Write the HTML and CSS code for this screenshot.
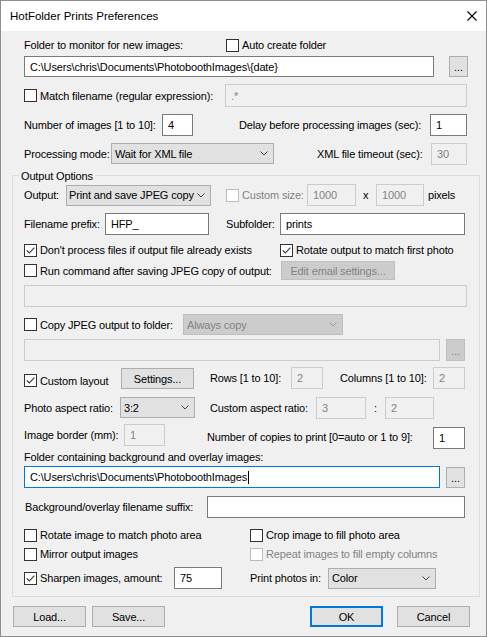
FILE: index.html
```html
<!DOCTYPE html>
<html>
<head>
<meta charset="utf-8">
<link rel="stylesheet" href="styles.css">
</head>
<body>
<div class="window">
  <div class="titlebar">
    <span class="title">HotFolder Prints Preferences</span>
    <svg class="close" width="10" height="10" viewBox="0 0 10 10"><path d="M0.5 0.5L9.5 9.5M9.5 0.5L0.5 9.5" stroke="#000" stroke-width="1.1" fill="none"/></svg>
  </div>

  <div class="row r1">
    <span class="lbl ml-23 w-202">Folder to monitor for new images:</span>
    <span class="chk"><span class="box"></span>Auto create folder</span>
  </div>
  <div class="row r2">
    <div class="field ml-23 w-410">C:\Users\chris\Documents\PhotoboothImages\{date}</div>
    <div class="btn dots ml-15 w-19">...</div>
  </div>
  <div class="row r3">
    <span class="chk ml-23 w-201"><span class="box"></span>Match filename (regular expression):</span>
    <div class="field dis h23 w-242">.*</div>
  </div>
  <div class="row r4">
    <span class="lbl ml-23 w-138">Number of images [1 to 10]:</span>
    <div class="field w-31">4</div>
    <span class="lbl ml-46 w-191">Delay before processing images (sec):</span>
    <div class="field w-37">1</div>
  </div>
  <div class="row r5">
    <span class="lbl ml-23 w-87">Processing mode:</span>
    <div class="combo w-163">Wait for XML file<svg class="chev" width="8" height="5" viewBox="0 0 8 5"><path d="M0.5 0.5L4 4L7.5 0.5" stroke="#444" fill="none"/></svg></div>
    <span class="lbl ml-43 w-114">XML file timeout (sec):</span>
    <div class="field dis w-36">30</div>
  </div>

  <div class="group">
    <span class="legend">Output Options</span>
    <div class="row g1">
      <span class="lbl ml-11 w-42">Output:</span>
      <div class="combo w-145">Print and save JPEG copy<svg class="chev" width="8" height="5" viewBox="0 0 8 5"><path d="M0.5 0.5L4 4L7.5 0.5" stroke="#444" fill="none"/></svg></div>
      <span class="chk off ml-15 w-81"><span class="box"></span>Custom size:</span>
      <div class="field dis w-49">1000</div>
      <span class="lbl sep-x w-20">x</span>
      <div class="field dis w-48">1000</div>
      <span class="lbl ml-4">pixels</span>
    </div>
    <div class="row g2">
      <span class="lbl ml-11 w-81">Filename prefix:</span>
      <div class="field w-104">HFP_</div>
      <span class="lbl ml-17 w-54">Subfolder:</span>
      <div class="field w-185">prints</div>
    </div>
    <div class="row g3">
      <span class="chk ml-11 w-256"><span class="box"><svg width="11" height="11" viewBox="0 0 11 11"><path d="M1.8 5.4L4.3 7.9L9.4 2.6" stroke="#333" stroke-width="1.1" fill="none"/></svg></span>Don't process files if output file already exists</span>
      <span class="chk"><span class="box"><svg width="11" height="11" viewBox="0 0 11 11"><path d="M1.8 5.4L4.3 7.9L9.4 2.6" stroke="#333" stroke-width="1.1" fill="none"/></svg></span>Rotate output to match first photo</span>
    </div>
    <div class="row g4">
      <span class="chk ml-11 w-257"><span class="box"></span>Run command after saving JPEG copy of output:</span>
      <div class="btn dis h19 w-114">Edit email settings...</div>
    </div>
    <div class="row g5">
      <div class="field dis ml-11 w-443"></div>
    </div>
    <div class="row g6">
      <span class="chk ml-11 w-159"><span class="box"></span>Copy JPEG output to folder:</span>
      <div class="combo dis w-160">Always copy<svg class="chev" width="8" height="5" viewBox="0 0 8 5"><path d="M0.5 0.5L4 4L7.5 0.5" stroke="#999" fill="none"/></svg></div>
    </div>
    <div class="row g7">
      <div class="field dis ml-11 w-416"></div>
      <div class="btn dis dots h22 ml-6 w-19">...</div>
    </div>
    <div class="row g8">
      <span class="chk ml-11 w-97 mt-7"><span class="box"><svg width="11" height="11" viewBox="0 0 11 11"><path d="M1.8 5.4L4.3 7.9L9.4 2.6" stroke="#333" stroke-width="1.1" fill="none"/></svg></span>Custom layout</span>
      <div class="btn w-73 mt-1">Settings...</div>
      <span class="lbl h22 ml-16 w-81">Rows [1 to 10]:</span>
      <div class="field dis w-32">2</div>
      <span class="lbl h22 ml-17 w-93">Columns [1 to 10]:</span>
      <div class="field dis w-32">2</div>
    </div>
    <div class="row g9">
      <span class="lbl ml-11 w-96">Photo aspect ratio:</span>
      <div class="combo w-75">3:2<svg class="chev" width="8" height="5" viewBox="0 0 8 5"><path d="M0.5 0.5L4 4L7.5 0.5" stroke="#444" fill="none"/></svg></div>
      <span class="lbl ml-15 w-106">Custom aspect ratio:</span>
      <div class="field dis w-50">3</div>
      <span class="lbl sep-colon w-19">:</span>
      <div class="field dis w-49">2</div>
    </div>
    <div class="row g10">
      <span class="lbl h22 ml-11 w-100">Image border (mm):</span>
      <div class="field dis w-41">1</div>
      <span class="lbl h22 ml-42 w-226 mt-2">Number of copies to print [0=auto or 1 to 9]:</span>
      <div class="field w-32 mt-3">1</div>
    </div>
    <div class="row g11">
      <span class="lbl ml-11">Folder containing background and overlay images:</span>
    </div>
    <div class="row g12">
      <div class="field focus ml-11 w-416">C:\Users\chris\Documents\PhotoboothImages<span class="caret"></span></div>
      <div class="btn dots ml-6 w-19">...</div>
    </div>
    <div class="row g13">
      <span class="lbl ml-12 w-182">Background/overlay filename suffix:</span>
      <div class="field w-258"></div>
    </div>
    <div class="row g14">
      <span class="chk ml-11 w-226"><span class="box"></span>Rotate image to match photo area</span>
      <span class="chk"><span class="box"></span>Crop image to fill photo area</span>
    </div>
    <div class="row g15">
      <span class="chk ml-11 w-226"><span class="box"></span>Mirror output images</span>
      <span class="chk off"><span class="box"></span>Repeat images to fill empty columns</span>
    </div>
    <div class="row g16">
      <span class="chk ml-11 w-150"><span class="box"><svg width="11" height="11" viewBox="0 0 11 11"><path d="M1.8 5.4L4.3 7.9L9.4 2.6" stroke="#333" stroke-width="1.1" fill="none"/></svg></span>Sharpen images, amount:</span>
      <div class="field w-48">75</div>
      <span class="lbl ml-28 w-78">Print photos in:</span>
      <div class="combo w-108">Color<svg class="chev" width="8" height="5" viewBox="0 0 8 5"><path d="M0.5 0.5L4 4L7.5 0.5" stroke="#444" fill="none"/></svg></div>
    </div>
  </div>

  <div class="row buttons">
    <div class="btn ml-12 w-73">Load...</div>
    <div class="btn ml-6 w-73">Save...</div>
    <div class="btn default ml-145 w-73">OK</div>
    <div class="btn ml-14 w-73">Cancel</div>
  </div>
</div>
</body>
</html>
```

FILE: styles.css
```css
html, body {
  margin: 0;
  padding: 0;
  background: #ffffff;
}

body {
  font-family: "Liberation Sans", Arial, sans-serif;
  font-size: 11px;
  letter-spacing: -0.15px;
  color: #000;
}

.window {
  width: 487px;
  height: 637px;
  box-sizing: border-box;
  border: 1px solid #8e8e8e;
  background: #f0f0f0;
  display: flex;
  flex-direction: column;
}

.titlebar {
  height: 30px;
  flex-shrink: 0;
  background: #ffffff;
  display: flex;
  align-items: center;
  justify-content: space-between;
  padding: 0 9px 0 9px;
}

.title {
  font-size: 11.5px;
  letter-spacing: 0;
  margin-top: -1px;
}

.close {
  display: block;
}

.row {
  display: flex;
  align-items: center;
  flex-shrink: 0;
  white-space: nowrap;
}

/* vertical rhythm */
.r1 { margin-top: 6px; height: 16px; }
.r2 { margin-top: 3px; height: 21px; }
.r3 { margin-top: 7px; height: 23px; }
.r4 { margin-top: 7px; height: 22px; }
.r5 { margin-top: 6px; height: 23px; }

.g1 { margin-top: 8px; height: 22px; }
.g2 { margin-top: 7px; height: 22px; }
.g3 { margin-top: 7px; height: 16px; }
.g4 { margin-top: 3px; height: 19px; }
.g5 { margin-top: 5px; height: 22px; }
.g6 { margin-top: 7px; height: 21px; }
.g7 { margin-top: 4px; height: 22px; }
.g8 { margin-top: 6px; height: 22px; align-items: flex-start; }
.g9 { margin-top: 7px; height: 23px; }
.g10 { margin-top: 5px; height: 25px; align-items: flex-start; }
.g11 { margin-top: 0; height: 16px; }
.g12 { margin-top: 1px; height: 22px; }
.g13 { margin-top: 8px; height: 22px; }
.g14 { margin-top: 9px; height: 16px; }
.g15 { margin-top: 3px; height: 16px; }
.g16 { margin-top: 5px; height: 22px; }

.buttons { margin-top: 9px; height: 21px; }

/* group box */
.group {
  position: relative;
  margin: 10px 0 0 11px;
  width: 468px;
  box-sizing: border-box;
  border: 1px solid #dcdcdc;
  padding-bottom: 7px;
  flex-shrink: 0;
}

.legend {
  position: absolute;
  top: -8px;
  left: 6px;
  padding: 0 2px;
  background: #f0f0f0;
  line-height: 16px;
}

/* generic pieces */
.lbl {
  display: inline-flex;
  align-items: center;
  flex-shrink: 0;
}

.h22 { height: 22px; }

.sep-x { padding-left: 7px; box-sizing: border-box; }
.sep-colon { padding-left: 8px; box-sizing: border-box; }

.chk {
  display: inline-flex;
  align-items: center;
  gap: 3px;
  flex-shrink: 0;
}

.box {
  width: 13px;
  height: 13px;
  box-sizing: border-box;
  border: 1px solid #333333;
  background: #ffffff;
  flex-shrink: 0;
}

.box svg { display: block; }

.chk.off { color: #838383; }
.chk.off .box { border-color: #bcbcbc; }

.field {
  height: 22px;
  box-sizing: border-box;
  border: 1px solid #7a7a7a;
  background: #ffffff;
  padding: 0 5px;
  display: flex;
  align-items: center;
  flex-shrink: 0;
  overflow: hidden;
}

.r2 .field { height: 21px; }

.field.h23 { height: 23px; }

.field.dis {
  border-color: #cccccc;
  background: #f0f0f0;
  color: #838383;
}

.field.focus {
  border-color: #0078d7;
}

.caret {
  display: inline-block;
  width: 1px;
  height: 13px;
  background: #000;
  margin-left: 1px;
}

.combo {
  height: 21px;
  box-sizing: border-box;
  border: 1px solid #adadad;
  background: #e1e1e1;
  padding: 0 5px 0 3px;
  display: flex;
  align-items: center;
  justify-content: space-between;
  flex-shrink: 0;
}

.g1 .combo { padding-left: 2px; }

.combo.dis {
  background: #cccccc;
  border-color: #bfbfbf;
  color: #838383;
}

.chev { display: block; flex-shrink: 0; }

.btn {
  height: 21px;
  box-sizing: border-box;
  border: 1px solid #adadad;
  background: #e1e1e1;
  display: flex;
  align-items: center;
  justify-content: center;
  flex-shrink: 0;
}

.btn.h19 { height: 19px; }
.btn.h22 { height: 22px; }

.btn.dis {
  background: #cccccc;
  border-color: #bfbfbf;
  color: #838383;
}

.btn.dots {
  align-items: flex-end;
  padding-bottom: 3px;
  font-size: 11px;
  letter-spacing: 0;
}

.btn.default {
  border: 2px solid #0078d7;
}

/* spacing utilities */
.ml-4 { margin-left: 4px; }
.ml-6 { margin-left: 6px; }
.ml-11 { margin-left: 11px; }
.ml-12 { margin-left: 12px; }
.ml-14 { margin-left: 14px; }
.ml-15 { margin-left: 15px; }
.ml-16 { margin-left: 16px; }
.ml-17 { margin-left: 17px; }
.ml-23 { margin-left: 23px; }
.ml-28 { margin-left: 28px; }
.ml-42 { margin-left: 42px; }
.ml-43 { margin-left: 43px; }
.ml-46 { margin-left: 46px; }
.ml-145 { margin-left: 145px; }

.mt-1 { margin-top: 1px; }
.mt-2 { margin-top: 2px; }
.mt-3 { margin-top: 3px; }
.mt-7 { margin-top: 7px; }

.w-19 { width: 19px; }
.w-20 { width: 20px; }
.w-31 { width: 31px; }
.w-32 { width: 32px; }
.w-36 { width: 36px; }
.w-37 { width: 37px; }
.w-41 { width: 41px; }
.w-42 { width: 42px; }
.w-48 { width: 48px; }
.w-49 { width: 49px; }
.w-50 { width: 50px; }
.w-54 { width: 54px; }
.w-73 { width: 73px; }
.w-75 { width: 75px; }
.w-78 { width: 78px; }
.w-81 { width: 81px; }
.w-87 { width: 87px; }
.w-93 { width: 93px; }
.w-96 { width: 96px; }
.w-97 { width: 97px; }
.w-100 { width: 100px; }
.w-104 { width: 104px; }
.w-106 { width: 106px; }
.w-108 { width: 108px; }
.w-114 { width: 114px; }
.w-138 { width: 138px; }
.w-145 { width: 145px; }
.w-150 { width: 150px; }
.w-159 { width: 159px; }
.w-160 { width: 160px; }
.w-163 { width: 163px; }
.w-182 { width: 182px; }
.w-185 { width: 185px; }
.w-191 { width: 191px; }
.w-201 { width: 201px; }
.w-202 { width: 202px; }
.w-226 { width: 226px; }
.w-242 { width: 242px; }
.w-256 { width: 256px; }
.w-257 { width: 257px; }
.w-258 { width: 258px; }
.w-410 { width: 410px; }
.w-416 { width: 416px; }
.w-443 { width: 443px; }
```
